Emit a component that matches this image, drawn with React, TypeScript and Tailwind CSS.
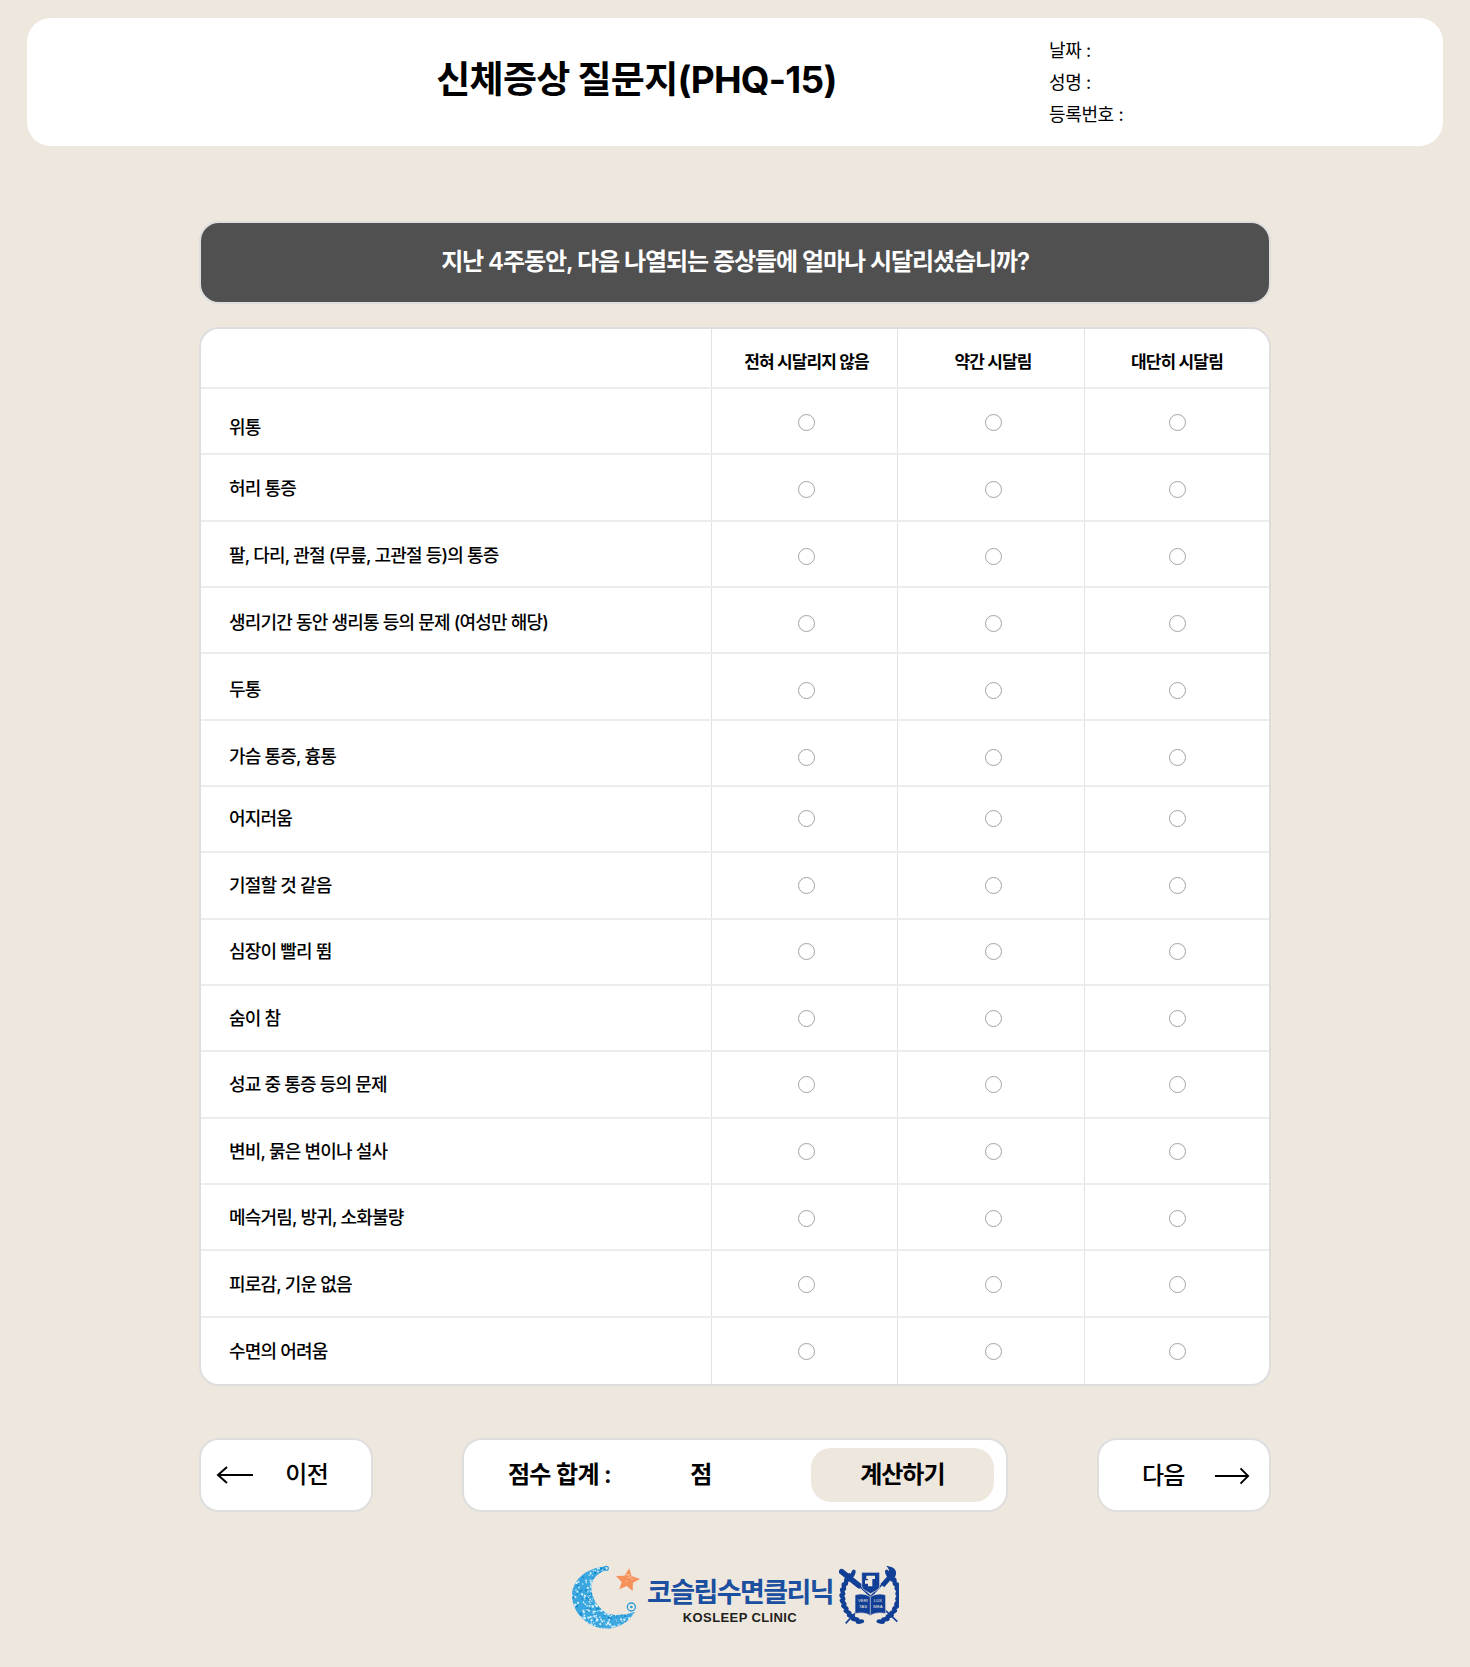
import React from "react";

const rows: [string, string, string][] = [
  ["위통", "pt-[12px]", "pt-[3px]"],
  ["허리 통증", "pt-[2px]", "pt-[4px]"],
  ["팔, 다리, 관절 (무릎, 고관절 등)의 통증", "pt-[3px]", "pt-[5px]"],
  ["생리기간 동안 생리통 등의 문제 (여성만 해당)", "pt-[4px]", "pt-[6px]"],
  ["두통", "pt-[7px]", "pt-[9px]"],
  ["가슴 통증, 흉통", "pt-[8px]", "pt-[10px]"],
  ["어지러움", "pb-[2px]", "pb-[2px]"],
  ["기절할 것 같음", "pt-0", "pt-0"],
  ["심장이 빨리 뜀", "pt-0", "pt-0"],
  ["숨이 참", "pt-0", "pt-0"],
  ["성교 중 통증 등의 문제", "pt-[1px]", "pt-[1px]"],
  ["변비, 묽은 변이나 설사", "pt-[1px]", "pt-[2px]"],
  ["메슥거림, 방귀, 소화불량", "pt-[1px]", "pt-[2px]"],
  ["피로감, 기운 없음", "pt-[2px]", "pt-[2px]"],
  ["수면의 어려움", "pt-[2px]", "pt-[2px]"],
];

function Radio() {
  return <span className="block w-[17px] h-[17px] rounded-full border border-[#a3a3a3] bg-white mx-auto" />;
}

function rnd(i: number) {
  const x = Math.sin(i * 12.9898) * 43758.5453;
  return x - Math.floor(x);
}

function Moon() {
  const marks: React.ReactNode[] = [];
  for (let i = 0; i < 620; i++) {
    const x = 30 + rnd(i) * 200;
    const y = 35 + rnd(i + 1000) * 195;
    const c = i % 4 === 0 ? "#1585c8" : "#d8eef8";
    marks.push(<circle key={i} cx={x} cy={y} r={1.6 + rnd(i + 2000) * 2} fill={c} />);
  }
  const starMarks: React.ReactNode[] = [];
  for (let i = 0; i < 14; i++) {
    starMarks.push(<circle key={i} cx={190 + rnd(i + 30) * 24} cy={62 + rnd(i + 60) * 28} r={1.8} fill="#fbc9a9" />);
  }
  const d = "M135 40C90 40 35 70 33 125C33 185 90 228 140 226C170 225 205 205 222 175C200 182 165 192 135 178C105 160 88 125 92 95C96 70 116 58 135 50Z";
  return (
    <svg width="70" height="65" viewBox="30 35 210 195" className="shrink-0">
      <defs>
        <clipPath id="moonclip">
          <path d={d} />
        </clipPath>
      </defs>
      <path d={d} fill="#3aa7e0" />
      <g clipPath="url(#moonclip)">{marks}</g>
      <circle cx="136" cy="45" r="6" fill="none" stroke="#2b9bd8" strokeWidth="3.5" />
      <circle cx="211" cy="161" r="12" fill="none" stroke="#2b9bd8" strokeWidth="4" />
      <circle cx="211" cy="161" r="4" fill="#2b9bd8" />
      <path d="M205 45L212 68L237 77L216 88L215 113L197 98L175 108L182 86L165 68L190 67Z" fill="#f6915a" />
      {starMarks}
    </svg>
  );
}

function Emblem() {
  const navy = "#123f96";
  const leaves: React.ReactNode[] = [];
  for (let i = 3; i < 15; i++) {
    const a = 0.1 + (i / 15) * 2.85;
    const r = 84;
    const ly = 122 - Math.cos(a) * r;
    const dx = Math.sin(a) * r;
    const deg = (a * 180) / Math.PI;
    leaves.push(<ellipse key={"l" + i} cx={124 - dx} cy={ly} rx="13" ry="6.5" fill={navy} transform={`rotate(${150 - deg} ${124 - dx} ${ly})`} />);
    leaves.push(<ellipse key={"r" + i} cx={124 + dx} cy={ly} rx="13" ry="6.5" fill={navy} transform={`rotate(${deg - 150} ${124 + dx} ${ly})`} />);
  }
  return (
    <svg width="60" height="62" viewBox="30 30 180 186" className="shrink-0">
      {leaves}
      <path d="M38 50L90 92" stroke={navy} strokeWidth="17" strokeLinecap="round" />
      <path d="M90 92L205 200" stroke={navy} strokeWidth="5" />
      <path d="M178 68L50 205" stroke={navy} strokeWidth="5" />
      <path d="M160 92L190 58" stroke={navy} strokeWidth="15" />
      <path d="M172 32C200 36 208 50 196 70C188 66 180 58 178 50C184 48 178 40 172 32Z" fill={navy} />
      <path d="M98 52H152V92C152 104 138 108 125 116C112 108 98 104 98 92Z" fill={navy} stroke="#eee7de" strokeWidth="2" />
      <path d="M112 62H138V72H130V94H117V86H108V76H117V72H112Z" fill="#eee7de" />
      <path d="M78 120C95 114 115 118 124 126C133 118 153 114 170 120V176C152 172 134 174 124 182C114 174 96 172 78 176Z" fill={navy} stroke="#eee7de" strokeWidth="2" />
      <path d="M124 126V182" stroke="#eee7de" strokeWidth="2" />
      <g fill="#eee7de" fontSize="13" fontFamily="'Liberation Sans', sans-serif" textAnchor="middle">
        <text x="102" y="140">VERI</text>
        <text x="102" y="158">TAS</text>
        <text x="147" y="140">LUX</text>
        <text x="147" y="158">MEA</text>
      </g>
    </svg>
  );
}

export default function App() {
  return (
    <div className="min-h-[1667px] bg-[#eee7de] px-[27px] pt-[18px] text-black font-['Inter','Noto_Sans_CJK_KR',sans-serif]">
      <header className="flex h-[128px] items-center rounded-[24px] bg-white">
        <div className="w-[1022px] pb-[4px] pl-[197px] text-center">
          <h1 className="text-[37px] font-bold tracking-[-0.02em]">신체증상 질문지(PHQ-15)</h1>
        </div>
        <div className="flex flex-col pt-[2px] text-[18px] leading-[32px] tracking-[-0.02em]">
          <span>날짜 :</span>
          <span>성명 :</span>
          <span>등록번호 :</span>
        </div>
      </header>

      <main className="mx-auto mt-[75px] w-[1072px]">
        <div className="flex h-[83px] items-center justify-center rounded-[20px] border-2 border-[#dedede] bg-[#505050] pb-[2px] text-[24px] font-semibold tracking-[-0.045em] text-white">
          지난 4주동안, 다음 나열되는 증상들에 얼마나 시달리셨습니까?
        </div>

        <div className="mt-[23px] overflow-hidden rounded-[20px] border-2 border-[#dedede] bg-white">
          <div className="grid h-[60px] grid-cols-[510px_186px_187px_1fr] border-b-2 border-[#ececec] text-[17px] font-bold tracking-[-0.05em]">
            <div />
            <div className="flex items-center justify-center border-l border-[#e2e2e2] pl-[4px] pt-[10px]">전혀 시달리지 않음</div>
            <div className="flex items-center justify-center border-l border-[#e2e2e2] pl-[4px] pt-[10px]">약간 시달림</div>
            <div className="flex items-center justify-center border-l border-[#e2e2e2] pt-[10px]">대단히 시달림</div>
          </div>
          {rows.map(([label, textPad, radioPad]) => (
            <div
              key={label}
              className="grid h-[66.33px] grid-cols-[510px_186px_187px_1fr] border-b-2 border-[#ececec] last:border-b-0"
            >
              <div className={`flex items-center pl-[28px] text-[18px] font-medium tracking-[-0.045em] ${textPad}`}>{label}</div>
              {[0, 1].map((c) => (
                <div key={c} className={`flex items-center justify-center border-l border-[#e2e2e2] pl-[4px] ${radioPad}`}>
                  <Radio />
                </div>
              ))}
              <div className={`flex items-center justify-center border-l border-[#e2e2e2] ${radioPad}`}>
                <Radio />
              </div>
            </div>
          ))}
        </div>

        <div className="mt-[52px] flex h-[74px] items-stretch justify-between">
          <button className="flex w-[174px] items-center justify-between rounded-[20px] border-2 border-[#dedede] bg-white pl-[15px] pr-[43px] text-[24px] font-medium">
            <svg width="38" height="20" viewBox="0 0 38 20" fill="none" stroke="black" strokeWidth="2"><path d="M37 10H2M11 2 2 10l9 8" /></svg>
            <span className="pt-[1px] tracking-[-0.03em]">이전</span>
          </button>
          <div className="flex w-[546px] items-center rounded-[20px] border-2 border-[#dedede] bg-white pl-[44px] pr-[12px] text-[24px] font-semibold tracking-[-0.03em]">
            <span className="w-[183px] pt-[1px]">점수 합계 :</span>
            <span className="w-[121px] pt-[1px] text-left">점</span>
            <button className="ml-auto h-[54px] w-[184px] rounded-[20px] bg-[#eee7de] pt-[1px] font-semibold tracking-[-0.04em]">계산하기</button>
          </div>
          <button className="flex w-[174px] items-center justify-between rounded-[20px] border-2 border-[#dedede] bg-white pl-[43px] pr-[19px] text-[24px] font-medium">
            <span className="pt-[2px] tracking-[-0.03em]">다음</span>
            <svg width="36" height="20" viewBox="0 0 38 20" fill="none" stroke="black" strokeWidth="2" className="mt-[2px]"><path d="M1 10h35M28 2l8 8-8 8" /></svg>
          </button>
        </div>

        <div className="mt-[53px] flex items-start justify-center">
          <Moon />
          <div className="ml-[6px] mt-[11px] flex flex-col items-center">
            <span className="text-[27px] font-semibold leading-[34px] tracking-[-0.06em] text-[#1b4f9f]">코슬립수면클리닉</span>
            <span className="font-['Liberation_Sans',sans-serif] text-[13px] font-bold leading-[16px] tracking-[0.03em] text-[#231f20]">KOSLEEP CLINIC</span>
          </div>
          <div className="ml-[6px]"><Emblem /></div>
        </div>
      </main>
    </div>
  );
}
